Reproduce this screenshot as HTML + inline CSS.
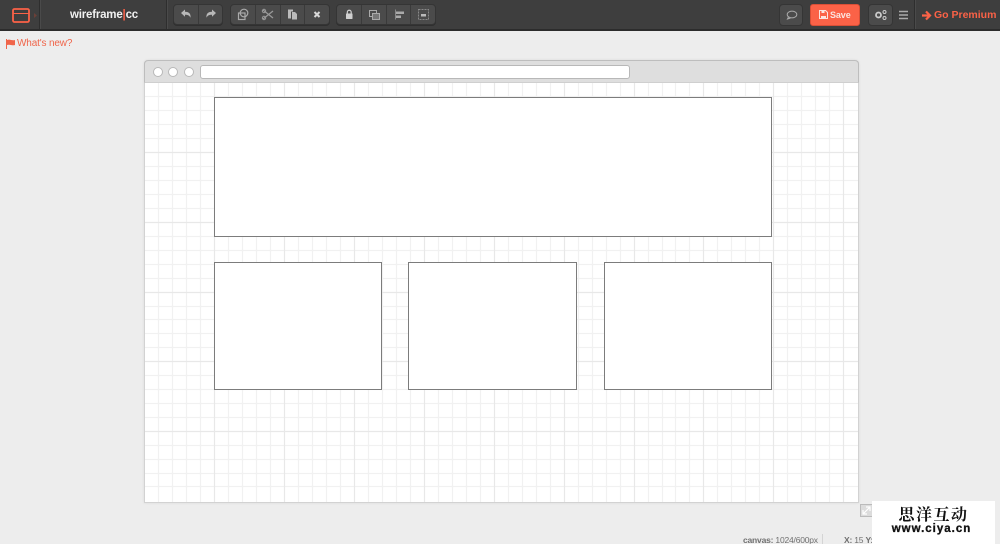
<!DOCTYPE html>
<html><head><meta charset="utf-8">
<style>
*{box-sizing:border-box}
html,body{margin:0;padding:0;width:1000px;height:544px;overflow:hidden;background:#ededed;font-family:"Liberation Sans",sans-serif}
body{position:relative}
#bar{position:absolute;left:0;top:0;width:1000px;height:31px;background:#3e3e3e;border-bottom:2px solid #2c2c2c}
.sep{position:absolute;top:0;width:1px;height:29px;background:#2e2e2e;box-shadow:1px 0 0 #4a4a4a}
.grp{position:absolute;top:4px;height:21px;background:#4b4b4b;border:1px solid #353535;border-radius:4px;display:flex;box-shadow:0 1px 0 #2f2f2f}
.grp div{flex:1;height:19px;border-right:1px solid #3a3a3a;position:relative}
.grp div:last-child{border-right:0}
.grp svg{position:absolute;left:0;top:0}
.ab{position:absolute}
.dot{position:absolute;top:67px;width:10px;height:10px;border-radius:50%;background:#fff;border:1.5px solid #b8b8b8}
.box{position:absolute;background:#fff;border:1px solid #7c7c7c}
.st{position:absolute;top:534px;font-size:8.5px;letter-spacing:-.2px;color:#707070;line-height:12px;white-space:nowrap}
</style></head><body>
<div id="bar">
<svg class="ab" style="left:0;top:0" width="40" height="30"><rect x="13" y="9" width="16" height="13" rx="1.500" fill="none" stroke="#fb6247" stroke-width="1.800"/><path d="M13 13.500H29" stroke="#fb6247"/><path d="M34 13l3 2.500-3 2.500z" fill="#6b4038"/></svg>
<div class="sep" style="left:39px"></div>
<div class="ab" style="left:70px;top:8px;font-size:11.500px;letter-spacing:-.2px;font-weight:bold;color:#f1f1f1;line-height:15px;white-space:nowrap">wireframe<span style="color:#fb6247;font-weight:bold">|</span>cc</div>
<div class="sep" style="left:166px"></div>
<div class="grp" style="left:173px;width:50px"><div><svg width="25" height="19"><path d="M7 8l4-3.500v2.200c4 0 6 2 5.500 6-1-2.200-2.500-3-5.500-3v2z" fill="#b8b8b8"/></svg></div><div><svg width="25" height="19"><path d="M17 8l-4-3.500v2.200c-4 0-6 2-5.500 6 1-2.200 2.500-3 5.500-3v2z" fill="#b8b8b8"/></svg></div></div>
<div class="grp" style="left:230px;width:100px"><div><svg width="25" height="19"><rect x="7.500" y="8" width="6.500" height="6.500" fill="none" stroke="#aaa" stroke-width="1.200"/><circle cx="13" cy="8" r="3.800" fill="none" stroke="#aaa" stroke-width="1.200"/></svg></div><div><svg width="25" height="19"><path d="M7 5l10 8M7 14L17 6" stroke="#999" stroke-width="1.300"/><circle cx="8" cy="6" r="1.700" fill="none" stroke="#999"/><circle cx="8" cy="13" r="1.700" fill="none" stroke="#999"/></svg></div><div><svg width="25" height="19"><path d="M7 4.500h5v2h-2v7H7z" fill="#bbb"/><path d="M11 7h3l2 2v5.500h-5z" fill="#bbb"/></svg></div><div><svg width="25" height="19"><path d="M9.500 7l5 5M14.500 7l-5 5" stroke="#d8d8d8" stroke-width="2"/></svg></div></div>
<div class="grp" style="left:336px;width:100px"><div><svg width="25" height="19"><rect x="9" y="8.500" width="6.500" height="5.500" rx=".5" fill="#d0d0d0"/><path d="M10.300 9V7.200a1.950 1.950 0 013.900 0V9" fill="none" stroke="#d0d0d0" stroke-width="1.200"/></svg></div><div><svg width="25" height="19"><rect x="7.500" y="5.500" width="7" height="6" fill="#4b4b4b" stroke="#aaa"/><rect x="10.500" y="8.500" width="7" height="6" fill="#777" stroke="#aaa"/></svg></div><div><svg width="25" height="19"><path d="M8.500 4.500v10" stroke="#888"/><path d="M9 6.500h8v2.500H9zM9 10.500h5v2.500H9z" fill="#aaa"/></svg></div><div><svg width="25" height="19"><rect x="7.500" y="4.500" width="10" height="10" fill="none" stroke="#888" stroke-dasharray="2 1"/><rect x="10" y="9" width="5" height="2.500" fill="#bbb"/></svg></div></div>
<div class="ab" style="left:779px;top:4px;width:24px;height:22px;background:#4b4b4b;border:1px solid #353535;border-radius:4px"><svg class="ab" style="left:0;top:0" width="22" height="20"><ellipse cx="12" cy="9.500" rx="4.800" ry="3.400" fill="none" stroke="#aaa"/><path d="M8.500 12l-1 2 3-1" fill="none" stroke="#aaa"/></svg></div>
<div class="ab" style="left:810px;top:4px;width:50px;height:22px;background:#fb6247;border:1px solid #d94f37;border-radius:3px;color:#fbe4df;font-size:9px;font-weight:bold;line-height:20px;padding-left:19px;letter-spacing:-.1px">Save<svg class="ab" style="left:8px;top:5px" width="9" height="9"><path d="M.5.500h6l2 2v6H.500z" fill="none" stroke="#fbe4df"/><path d="M2.500 1h3v2h-3zM2 6h5v2H2z" fill="#fbe4df"/></svg></div>
<div class="ab" style="left:868px;top:4px;width:25px;height:22px;background:#4b4b4b;border:1px solid #353535;border-radius:4px"><svg class="ab" style="left:0;top:0" width="23" height="20"><circle cx="9.500" cy="10" r="2.500" fill="none" stroke="#ccc" stroke-width="1.800"/><circle cx="15.500" cy="7" r="1.500" fill="none" stroke="#ccc"/><circle cx="15.500" cy="13" r="1.500" fill="none" stroke="#ccc"/></svg></div>
<svg class="ab" style="left:899px;top:10px" width="10" height="10"><path d="M0 1.500h9M0 5h9M0 8.500h9" stroke="#aaa" stroke-width="1.400"/></svg>
<div class="sep" style="left:914px"></div>
<svg class="ab" style="left:921px;top:10px" width="11" height="11"><path d="M1 5.500h7M5 1.500l4 4-4 4" fill="none" stroke="#fb6247" stroke-width="2.200"/></svg>
<div class="ab" style="left:934px;top:8px;font-size:10.500px;font-weight:bold;color:#fb6247;line-height:15px;white-space:nowrap">Go Premium</div>
</div>

<svg class="ab" style="left:6px;top:39px" width="10" height="10"><path d="M.5 0v10" stroke="#f0654a"/><path d="M1 1c3-1.200 5 1 8 0v5c-3 1-5-1-8 0z" fill="#f0654a"/></svg>
<div class="ab" style="left:17px;top:38px;font-size:10px;letter-spacing:-.15px;color:#f0654a;line-height:12px;white-space:nowrap">What's new?</div>

<div class="ab" style="left:144px;top:60px;width:715px;height:443px;background:#fff;border:1px solid #d2d2d2;border-top:0;border-radius:4px 4px 0 0;box-shadow:0 0 2px #d8d8d8"></div>
<svg class="ab" style="left:145px;top:83px" width="713" height="419">
<g stroke="#f1f1f1" stroke-width="1.200" fill="none">
<path d="M13.500 0v419M27.500 0v419M41.500 0v419M55.500 0v419M83.500 0v419M97.500 0v419M111.500 0v419M125.500 0v419M153.500 0v419M167.500 0v419M181.500 0v419M195.500 0v419M223.500 0v419M237.500 0v419M251.500 0v419M265.500 0v419M293.500 0v419M307.500 0v419M321.500 0v419M335.500 0v419M363.500 0v419M377.500 0v419M391.500 0v419M405.500 0v419M433.500 0v419M447.500 0v419M461.500 0v419M475.500 0v419M503.500 0v419M517.500 0v419M530.500 0v419M544.500 0v419M572.500 0v419M586.500 0v419M600.500 0v419M614.500 0v419M642.500 0v419M656.500 0v419M670.500 0v419M684.500 0v419"/>
<path d="M0 13.500h713M0 27.500h713M0 41.500h713M0 55.500h713M0 83.500h713M0 97.500h713M0 111.500h713M0 125.500h713M0 153.500h713M0 167.500h713M0 181.500h713M0 195.500h713M0 223.500h713M0 236.500h713M0 250.500h713M0 264.500h713M0 292.500h713M0 306.500h713M0 320.500h713M0 334.500h713M0 362.500h713M0 376.500h713M0 390.500h713M0 403.500h713"/>
</g>
<g stroke="#e8e8e8" stroke-width="1.200" fill="none">
<path d="M69.500 0v419M139.500 0v419M209.500 0v419M279.500 0v419M349.500 0v419M419.500 0v419M489.500 0v419M558.500 0v419M628.500 0v419M698.500 0v419"/>
<path d="M0 69.500h713M0 139.500h713M0 209.500h713M0 278.500h713M0 348.500h713"/>
</g>
</svg>
<div class="ab" style="left:144px;top:60px;width:715px;height:23px;background:#dedede;border:1px solid #bdbdbd;border-bottom:1px solid #cfcfcf;border-radius:4px 4px 0 0"></div>
<div class="dot" style="left:153px"></div>
<div class="dot" style="left:168px"></div>
<div class="dot" style="left:184px"></div>
<div class="ab" style="left:200px;top:65px;width:430px;height:14px;border-radius:3px;background:#fff;border:1.500px solid #b8b8b8"></div>

<div class="box" style="left:214px;top:97px;width:558px;height:140px"></div>
<div class="box" style="left:214px;top:262px;width:168px;height:128px"></div>
<div class="box" style="left:408px;top:262px;width:169px;height:128px"></div>
<div class="box" style="left:604px;top:262px;width:168px;height:128px"></div>

<svg class="ab" style="left:860px;top:504px" width="13" height="13"><rect x=".5" y=".5" width="12" height="12" fill="#dcdcdc" stroke="#bbb"/><path d="M3 10l7-7M6 3h4v4M3 6v4h4" fill="none" stroke="#fff" stroke-width="1.200"/></svg>

<div class="st" style="left:743px"><b>canvas:</b> 1024/600px</div>
<div class="ab" style="left:822px;top:534px;width:1px;height:10px;background:#d4d4d4"></div>
<div class="st" style="left:844px"><b>X:</b> 15 <b>Y:</b> 393</div>
<div class="ab" style="left:909px;top:534px;width:1px;height:10px;background:#d4d4d4"></div>
<div class="st" style="left:926px"><b>W:</b> 0px, <b>H:</b> 0px</div>

<div class="ab" style="left:872px;top:501px;width:123px;height:43px;background:#fff"></div>
<div class="ab" style="left:872px;top:506px;width:123px;text-align:center;font-family:'Liberation Serif','Noto Serif CJK SC',serif;font-weight:bold;font-size:16px;letter-spacing:1.500px;line-height:19px;color:#111;white-space:nowrap">思洋互动</div>
<div class="ab" style="left:870px;top:523px;width:123px;text-align:center;font-family:'Liberation Sans',sans-serif;font-weight:bold;font-size:11.500px;letter-spacing:1px;line-height:13px;color:#111;-webkit-text-stroke:.3px #111;white-space:nowrap">www.ciya.cn</div>
</body></html>
